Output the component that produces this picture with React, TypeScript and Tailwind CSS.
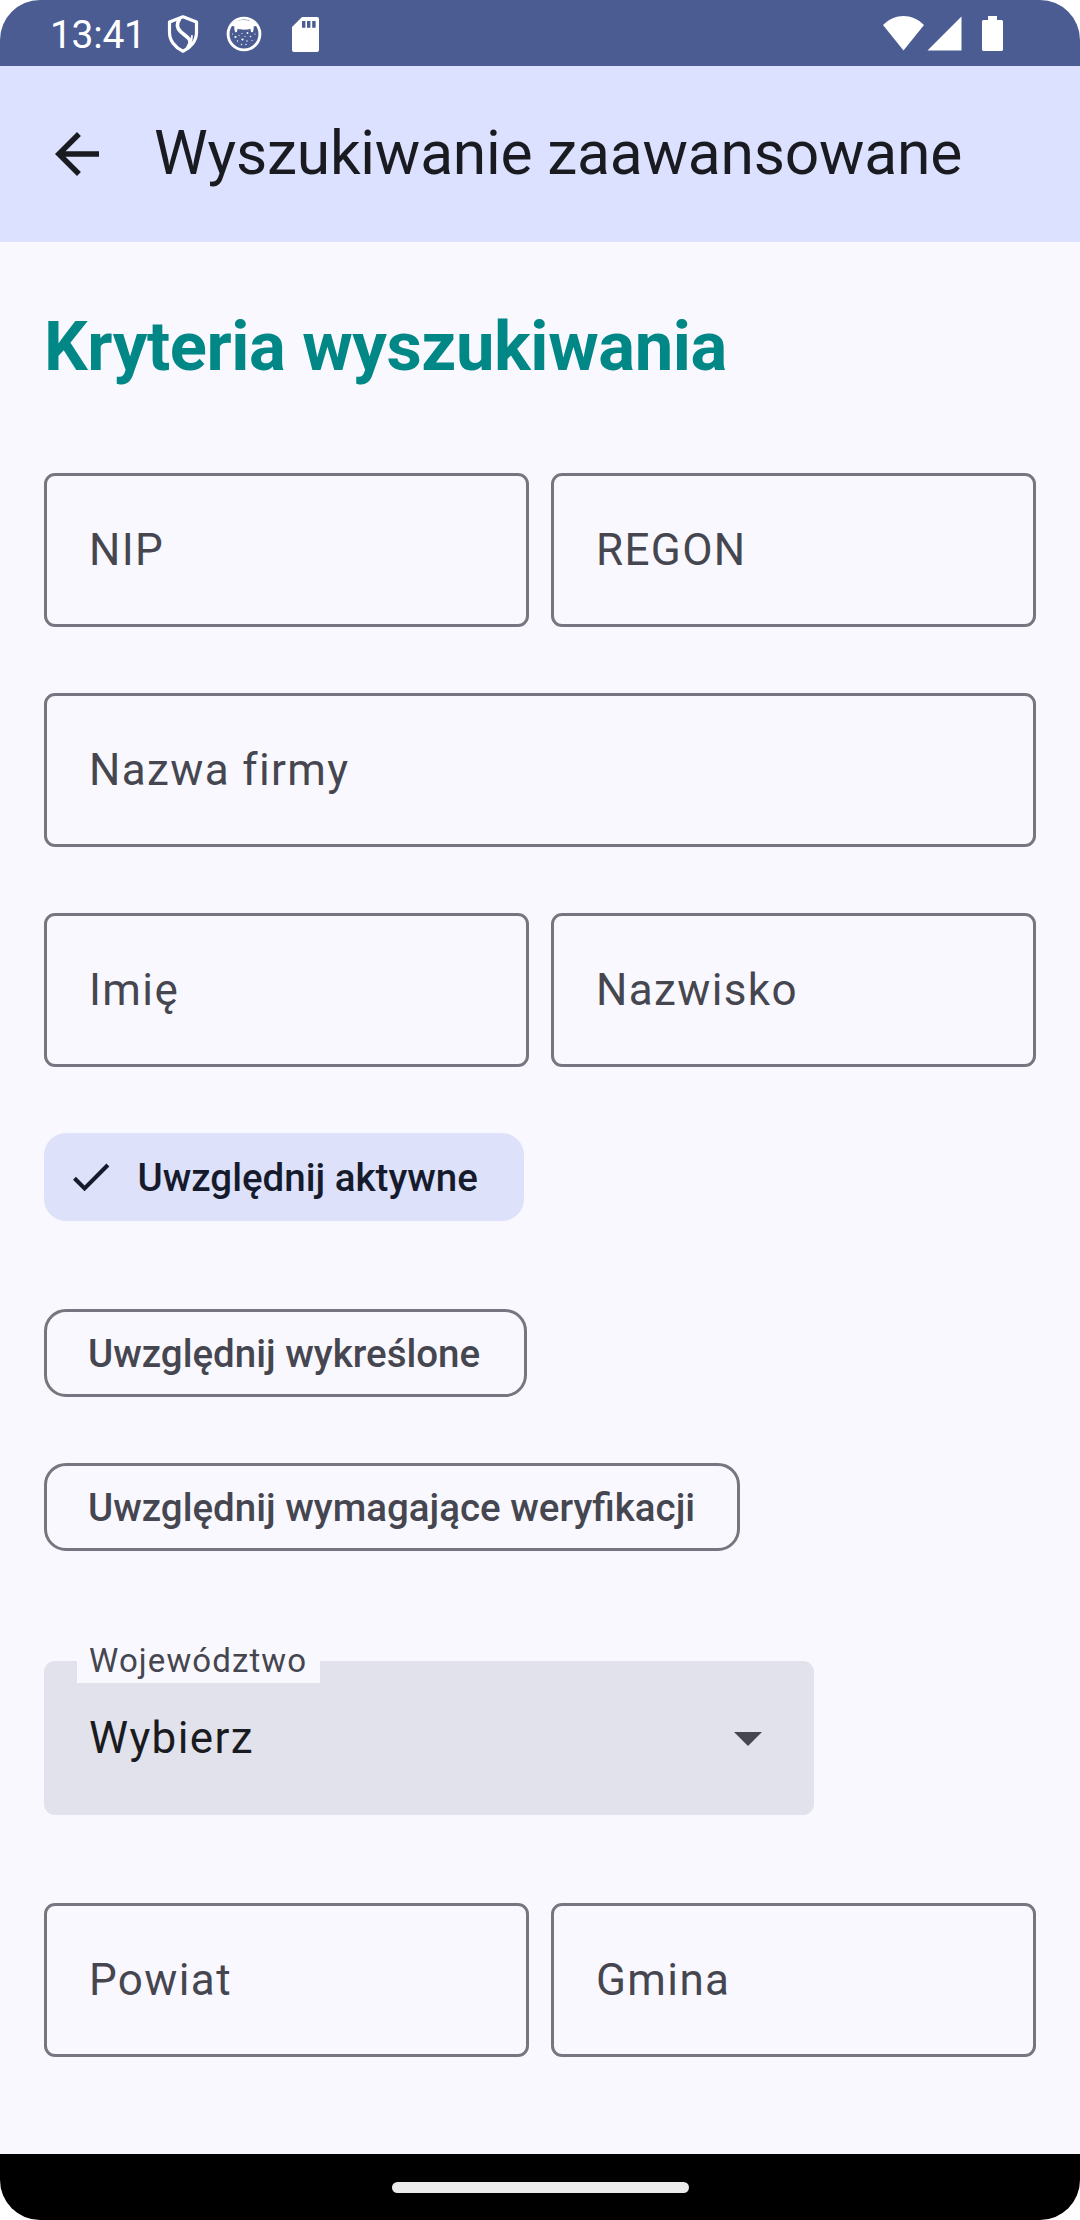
import React from "react";

function Field({ label }: { label: string }) {
  return (
    <div className="flex h-[154px] flex-1 items-center rounded-[11px] border-[3px] border-[#757680] pl-[42px] text-[44px] leading-[66px] tracking-[1.375px] text-[#45464f]">
      {label}
    </div>
  );
}

function Chip({ label, selected, width }: { label: string; selected?: boolean; width: string }) {
  const look = selected
    ? "bg-[#dde1f9] pl-[22px] text-[#151b2c]"
    : "border-[3px] border-[#757680] pl-[41px] text-[#45464f]";
  return (
    <div
      className={`flex h-[88px] items-center rounded-[22px] text-[38.5px] font-medium leading-[55px] whitespace-nowrap ${width} ${look}`}
    >
      {selected && (
        <svg viewBox="0 0 24 24" className="mr-[22px] size-[49.5px]" fill="currentColor">
          <path d="M9 16.2L4.8 12l-1.4 1.4L9 19 21 7l-1.4-1.4L9 16.2z" />
        </svg>
      )}
      {label}
    </div>
  );
}

function ShieldIcon() {
  return (
    <svg viewBox="0 0 32 38" className="h-[38px] w-8" fill="none" stroke="#fff" strokeLinejoin="round">
      <path d="M16 1.8 L29.5 7 V17.5 C29.5 25.5 24 32.5 16 36.2 C8 32.5 2.5 25.5 2.5 17.5 V7 Z" strokeWidth="3.2" />
      <path d="M12.8 3.5 C9.5 8.5 9.8 13.5 14 17 C19 21.5 25.5 24 22.3 30.5" strokeWidth="3.6" />
      <path d="M25 20 C26 25 24 29 19 33 L23 26 Z" fill="#fff" strokeWidth="1" />
    </svg>
  );
}

function CatIcon() {
  return (
    <svg viewBox="0 0 36 36" className="size-9" fill="none">
      <circle cx="18" cy="18" r="15.9" stroke="#fff" strokeWidth="2.9" />
      <path
        fill="#fff"
        d="M4.5 9.5 C8 2 28 2 31.5 9.5 L27.5 10.5 C28 12.5 27.5 14.5 26.8 16.2 L25 16 L24.5 12.8 C21 14 15 14 11.5 12.8 L11 16 L9.2 16.2 C8.5 14.5 8 12.5 8.5 10.5 Z"
      />
      <g fill="#fff">
        <circle cx="21.5" cy="17" r="0.9" />
        <circle cx="16" cy="17.5" r="0.6" />
        <circle cx="6.5" cy="18" r="0.6" />
        <circle cx="29" cy="18" r="0.6" />
        <circle cx="9.5" cy="21" r="1.1" />
        <circle cx="13" cy="19.5" r="0.6" />
        <circle cx="19" cy="20.5" r="0.6" />
        <circle cx="24.5" cy="20.5" r="0.8" />
        <circle cx="16.5" cy="23.5" r="1.1" />
        <circle cx="11.5" cy="25" r="0.7" />
        <circle cx="21" cy="25" r="0.7" />
        <circle cx="26" cy="24.5" r="0.6" />
        <circle cx="15.5" cy="28.5" r="0.7" />
        <circle cx="20" cy="28.5" r="0.7" />
      </g>
    </svg>
  );
}

function SdCardIcon() {
  return (
    <svg viewBox="0 0 27 35" className="h-[35px] w-[27px]">
      <path fill="#fff" d="M10 0 H25 Q27 0 27 2 V33 Q27 35 25 35 H2 Q0 35 0 33 V10 Z" />
      <path fill="#4a5c92" d="M10 4h3.4v6.7H10zM15 4h3.4v6.7H15zM20.2 4h3.4v6.7h-3.4z" />
    </svg>
  );
}

function StatusBar() {
  return (
    <div className="flex h-[66px] items-center bg-[#4a5c92] pt-0.5 pl-[50px] text-white">
      <span className="w-[117px] pt-0.5 text-[39px] leading-[46px] tracking-[-0.3px]">13:41</span>
      <ShieldIcon />
      <span className="ml-[27px] flex">
        <CatIcon />
      </span>
      <span className="ml-[30px] flex">
        <SdCardIcon />
      </span>
      <div className="mr-[77px] ml-auto flex pb-0.5">
        <svg viewBox="0 0 41 35" className="h-[35px] w-[41px]" fill="#fff">
          <path d="M0 9 C12 -3 29 -3 41 9 L20.5 34.5 Z" />
        </svg>
        <svg viewBox="0 0 35 35" className="ml-[3px] h-[35px] w-[35px]" fill="#fff">
          <path d="M34.5 0.5 V34.5 H0.5 Z" />
        </svg>
        <svg viewBox="0 0 21 35" className="ml-5 h-[35px] w-[21px]" fill="#fff">
          <path d="M6 0 H15 V4 H20 L21 5 V34 L20 35 H1 L0 34 V5 L1 4 H6 Z" />
        </svg>
      </div>
    </div>
  );
}

export default function App() {
  return (
    <div className="h-[2220px] w-[1080px] bg-white font-['Roboto',sans-serif]">
      <div className="flex h-full flex-col overflow-hidden rounded-[40px] bg-[#faf8ff]">
        <StatusBar />
        <header className="flex h-[176px] items-center bg-[#dbe1ff] pl-11 text-[#1a1b21]">
          <svg viewBox="0 0 24 24" className="size-[66px]" fill="currentColor">
            <path d="M20 11H7.83l5.59-5.59L12 4l-8 8 8 8 1.41-1.41L7.83 13H20v-2z" />
          </svg>
          <h1 className="ml-11 pb-px text-[60.5px] leading-[77px] font-normal tracking-[-0.2px]">
            Wyszukiwanie zaawansowane
          </h1>
        </header>
        <main className="flex flex-1 flex-col px-11 pt-[61px]">
          <h2 className="text-[68.75px] leading-[88px] font-bold tracking-[-0.4px] text-[#018786]">
            Kryteria wyszukiwania
          </h2>
          <div className="mt-[82px] flex flex-col gap-[66px]">
            <div className="flex gap-[22px]">
              <Field label="NIP" />
              <Field label="REGON" />
            </div>
            <div className="flex">
              <Field label="Nazwa firmy" />
            </div>
            <div className="flex gap-[22px]">
              <Field label="Imię" />
              <Field label="Nazwisko" />
            </div>
          </div>
          <div className="mt-[66px] flex flex-col">
            <Chip label="Uwzględnij aktywne" selected width="w-[480px]" />
            <div className="mt-[88px] flex flex-col gap-[66px]">
              <Chip label="Uwzględnij wykreślone" width="w-[483px]" />
              <Chip label="Uwzględnij wymagające weryfikacji" width="w-[696px]" />
            </div>
          </div>
          <div className="relative mt-[110px] flex h-[154px] w-[770px] items-center justify-between rounded-[11px] bg-[#e2e2ec] pr-[52px] pl-[45px] text-[44px] leading-[66px] tracking-[1.375px] text-[#1a1b21]">
            <span>Wybierz</span>
            <svg viewBox="0 0 28 14" className="mt-0.5 h-3.5 w-7" fill="#45464f">
              <path d="M0 0h28L14 14z" />
            </svg>
            <span className="absolute -top-[22px] left-[33px] flex h-11 w-[243px] items-center bg-[#faf8ff] pl-3 text-[33px] leading-[44px] tracking-[1.1px] text-[#45464f]">
              Województwo
            </span>
          </div>
          <div className="mt-[88px] flex gap-[22px]">
            <Field label="Powiat" />
            <Field label="Gmina" />
          </div>
        </main>
        <footer className="flex h-[66px] items-center justify-center bg-black">
          <div className="h-[11px] w-[297px] rounded-[5.5px] bg-[#ebebeb]" />
        </footer>
      </div>
    </div>
  );
}
